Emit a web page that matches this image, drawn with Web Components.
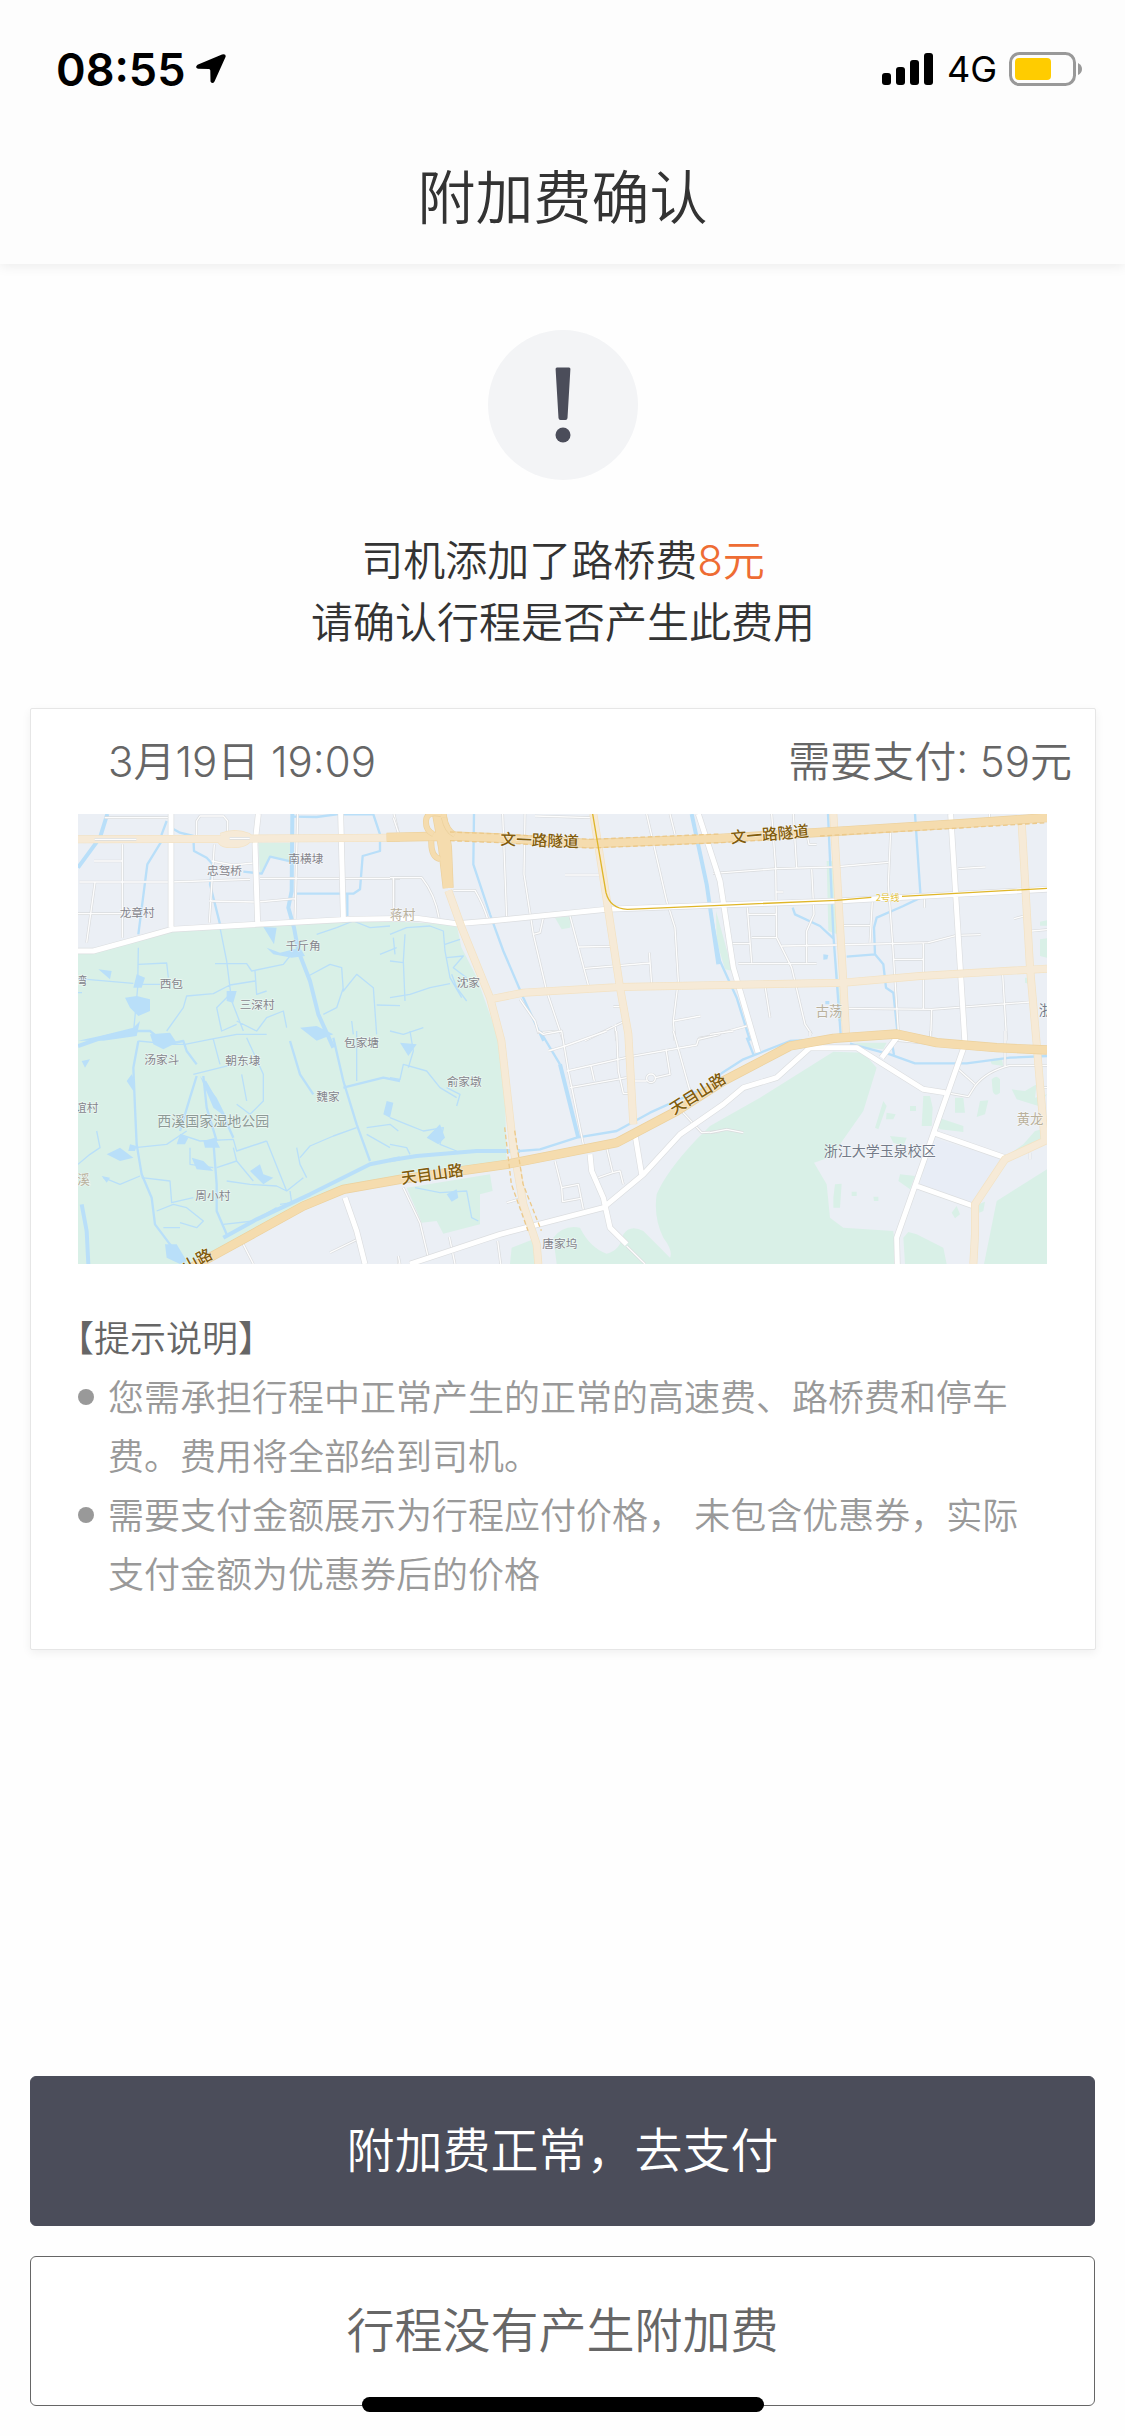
<!DOCTYPE html>
<html lang="zh-CN">
<head>
<meta charset="utf-8">
<meta name="viewport" content="width=device-width, initial-scale=1">
<title>附加费确认</title>
<style>
  body {
    margin: 0;
    background: #fefefe;
    color: #333;
    font-family: Inter, "Noto Sans CJK SC", sans-serif;
    font-weight: 350;
  }
</style>
</head>
<body>
<fee-page>
  <status-bar slot="top" time="08:55" network="4G"></status-bar>
  <page-header slot="top">附加费确认</page-header>
  <fee-notice>
    <span>司机添加了路桥费</span>
    <em slot="amount">8元</em>
    <span slot="question">请确认行程是否产生此费用</span>
  </fee-notice>
  <trip-card>
    <time slot="date">3月19日 19:09</time>
    <span slot="price">需要支付: 59元</span>
    <trip-map></trip-map>
    <tip-list heading="【提示说明】">
      <tip-item>您需承担行程中正常产生的正常的高速费、路桥费和停车费。费用将全部给到司机。</tip-item>
      <tip-item>需要支付金额展示为行程应付价格， 未包含优惠券，实际支付金额为优惠券后的价格</tip-item>
    </tip-list>
  </trip-card>
  <fee-button slot="actions" primary>附加费正常，去支付</fee-button>
  <fee-button slot="actions">行程没有产生附加费</fee-button>
</fee-page>

<script>
'use strict';

function makeTemplate(html) {
	const template = document.createElement('template');
	template.innerHTML = html;
	return template;
}

class BaseElement extends HTMLElement {
	constructor() {
		super();
		const shadow = this.attachShadow({mode: 'open'});
		shadow.appendChild(this.constructor.template.content.cloneNode(true));
	}
}

class FeePage extends BaseElement {
	static template = makeTemplate(`
<style>
  :host {
    display: flex;
    flex-direction: column;
    position: relative;
    min-height: 100vh;
  }
  header {
    background: #fdfdfd;
    box-shadow: 0 2px 12px rgba(0, 0, 0, .08);
  }
  main {
    padding: 66px 29px 60px 30px;
  }
  footer {
    display: grid;
    gap: 30px;
    margin-top: auto;
    padding: 0 30px 30px;
  }
  .home {
    position: absolute;
    left: 50%;
    bottom: 24px;
    width: 402px;
    height: 15px;
    margin-left: -201px;
    border-radius: 8px;
    background: #000;
  }
</style>
<header><slot name="top"></slot></header>
<main><slot></slot></main>
<footer><slot name="actions"></slot></footer>
<div class="home"></div>`);
}

customElements.define('fee-page', FeePage);

class StatusBar extends BaseElement {
	static template = makeTemplate(`
<style>
  :host {
    display: flex;
    align-items: center;
    height: 132px;
    padding: 6px 42px 0 56px;
    box-sizing: border-box;
    color: #000;
  }
  .time {
    font-size: 45px;
    font-weight: 600;
  }
  .arrow {
    margin-left: 10px;
  }
  .bars {
    margin-left: auto;
  }
  .network {
    margin: 0 12px;
    font-size: 36px;
    font-weight: 400;
  }
</style>
<span class="time"></span>
<svg class="arrow" width="32" height="32" viewBox="0 0 32 32"><path d="M27 1.500Q31.500 .5 30.500 4L19.500 28.500Q17.500 31.500 15.500 28.500L15.300 17.500Q15.200 16 14 16L3 15.800Q-.5 14.500 2.500 11.800Z"/></svg>
<svg class="bars" width="53" height="34" viewBox="0 0 53 34"><rect x="0" y="21" width="9" height="12" rx="3"/><rect x="14" y="15" width="9" height="18" rx="3"/><rect x="28" y="8" width="9" height="25" rx="3"/><rect x="42" y="1" width="9" height="32" rx="3"/></svg>
<span class="network"></span>
<svg width="74" height="36" viewBox="0 0 74 36">
  <rect x="1.500" y="2.500" width="64" height="31" rx="9" fill="none" stroke="#999" stroke-width="3"/>
  <rect x="6" y="7" width="36" height="22" rx="4" fill="#fc0"/>
  <path d="M69 12Q73 14 73 18T69 24Z" fill="#999"/>
</svg>`);

	connectedCallback() {
		this.shadowRoot.querySelector('.time').textContent = this.getAttribute('time');
		this.shadowRoot.querySelector('.network').textContent = this.getAttribute('network');
	}
}

customElements.define('status-bar', StatusBar);

class PageHeader extends BaseElement {
	static template = makeTemplate(`
<style>
  :host {
    display: block;
    height: 132px;
  }
  h1 {
    margin: 0;
    font-size: 58px;
    font-weight: inherit;
    line-height: 132px;
    text-align: center;
  }
</style>
<h1><slot></slot></h1>`);
}

customElements.define('page-header', PageHeader);

class FeeNotice extends BaseElement {
	static template = makeTemplate(`
<style>
  :host {
    display: block;
    padding-bottom: 54px;
    font-size: 42px;
    line-height: 62px;
  }
  svg {
    display: block;
    margin: 0 auto 50px;
  }
  p {
    display: flex;
    justify-content: center;
    margin: 0;
  }
  ::slotted(em) {
    color: #ee6c33;
    font-style: normal;
  }
</style>
<svg width="150" height="150" viewBox="0 0 150 150">
  <circle cx="75" cy="75" r="75" fill="#f3f4f6"/>
  <path d="M69 37.500H81Q82.500 37.500 82.400 39L79.500 88Q79.300 90 77.500 90H72.500Q70.700 90 70.500 88L67.600 39Q67.500 37.500 69 37.500Z" fill="#4b4d5a"/>
  <circle cx="75" cy="105" r="7.500" fill="#4b4d5a"/>
</svg>
<p><slot></slot><slot name="amount"></slot></p>
<p><slot name="question"></slot></p>`);
}

customElements.define('fee-notice', FeeNotice);

class TripCard extends BaseElement {
	static template = makeTemplate(`
<style>
  :host {
    display: block;
    border: 1px solid #e6e6e6;
    border-radius: 2px;
    box-shadow: 0 3px 10px rgba(0, 0, 0, .06);
    background: #fff;
  }
  .summary {
    display: flex;
    justify-content: space-between;
    padding: 0 23px 0 77px;
    color: #666;
    font-size: 42px;
    line-height: 105px;
  }
  .content {
    padding: 0 48px 44px 47px;
  }
</style>
<div class="summary"><slot name="date"></slot><slot name="price"></slot></div>
<div class="content"><slot></slot></div>`);
}

customElements.define('trip-card', TripCard);

// Map drawing, in a 2907 x 1350 space. Every sheet has its own origin.
const mapStyles = {
	park: { fill: '#d9f0e7' },
	campus: { fill: '#e8edf6' },
	lake: { fill: '#b9dff9' },
	river: { stroke: '#b9dff9', width: 12 },
	stream: { stroke: '#b9dff9', width: 7 },
	brook: { stroke: '#b9dff9', width: 4 },
	lane: { stroke: '#fdfdfd', width: 4, edge: '#d9dbdd' },
	street: { stroke: '#fff', width: 15, edge: '#dcdee0' },
	avenue: { stroke: '#f6ead7', width: 20, edge: '#f3e2c3' },
	highway: { stroke: '#f5dcae', width: 24, edge: '#ecd19d' },
	ramp: { stroke: '#f5dcae', width: 14, edge: '#ecd19d' },
	dash: { stroke: '#ecc98a', width: 4, dash: '14 8' },
	metro: { stroke: '#dfb629', width: 4 },
};

const mapSheets = [
	{ x: 0, y: 0, shapes: [
		['park', 'M0 411L46 411 156 381 281 346 536 331 816 316 1136 332 1150 400 1196 490 1260 670 1281 851 1286 1050 966 1091 806 1121 686 1180 406 1320 350 1350H0Z'],
	] },
	// north west
	{ x: -24, y: -39, shapes: [
		['park', 'M565 125H665L660 180 600 165 570 220Z'],
		['river', 'M112 39L90 110 24 200M667 39L665 270 655 320 672 380 685 450 720 540 745 640 790 740'],
		['stream', 'M290 60L275 100 272 125 232 190 205 400M303 80L330 95 370 105 372 150 410 170 428 190 420 250 450 370M667 47L740 48 800 40 910 40 930 100 930 150 878 165 870 265 850 278 680 278M832 280V345M665 182L600 167 575 218 520 212'],
		['brook', 'M450 380L470 480 485 600 520 690M205 440L203 560 190 700M205 490L290 486 295 530M24 533L190 547M205 550L270 550M435 488L530 488 545 510 640 490 660 465M290 690L340 620 350 585 430 578 480 552 555 540M555 510L560 580 590 570M480 580L440 620 455 690 500 670M500 660L560 690 590 650 640 630 650 680M715 525L780 490 815 500 820 570 860 520 910 560 920 700M760 640L800 620 820 560M920 612L990 614M740 400L800 380 850 360 900 380 960 375M845 660L850 700M930 460L980 440M24 575H36'],
		['lake', 'M590 440L630 455 690 440 705 465 665 470 610 460ZM165 590L200 585 240 595 240 630 205 645 180 620ZM470 570L500 570 490 605 470 600ZM200 520L225 530 215 560H190ZM85 505L125 510 120 535ZM580 378L620 380 612 430ZM690 680L740 675 790 700 740 719ZM24 719L90 705 190 680 210 660 200 705 100 719Z'],
		['lane', 'M104 50H300M157 130V410M72 180H157M28 243H300L540 235M24 338H155M75 245L50 425M380 110V60L390 45H460L473 60V110M433 130L418 365M425 180L490 192 550 186M418 300L563 303 675 293M683 39L675 355M570 232H990M972 39L985 95M972 232V320'],
	] },
	// north centre
	{ x: 936, y: -39, shapes: [
		['park', 'M495 350L545 345 540 380 515 385Z'],
		['stream', 'M252 39L250 190 300 340 340 450 400 590 460 720'],
		['river', 'M905 39L950 250 985 490'],
		['brook', 'M0 400L50 380 120 375 160 390 165 450 180 530 215 590M45 400L40 480 45 600M0 590L60 580 120 560 180 548M165 430L210 415M170 470L220 465 190 500 230 530M0 480L40 485M0 690L40 700 100 680M10 410L15 460M185 520L200 560 230 600'],
		['lane', 'M10 50L25 95M0 230H95Q135 280 147 350M10 232V340M190 268H255Q280 310 295 360M338 39L350 350M405 39L402 220 430 400 450 395 460 350M430 400L470 570 520 719M435 45L600 50M770 39L830 300 855 380 865 540 850 660 855 719M840 39L855 100M525 222H630M540 345L595 552M565 438L665 436M585 502L780 486M778 455L785 550M390 595L435 660 445 695 515 690M585 719L705 660M670 617H690M675 670L680 719M850 660L932 645M925 712L990 700M970 217H990'],
	] },
	// north east
	{ x: 1896, y: -39, shapes: [
		['park', 'M350 180L370 180 382 400 355 390ZM18 330L68 510 45 505 20 420ZM990 362L1011 358V374H990ZM990 415L1011 412V470L990 465ZM945 530H962L960 550 945 545ZM376 450L398 660 385 660Z'],
		['stream', 'M354 39L370 400 392 700M0 320L30 480 80 590 120 719M615 39L632 290 580 315 500 350 492 380 495 460 410 467M495 460L520 490 528 560 550 575 562 690M248 320L255 340 330 375 370 412'],
		['lake', 'M340 460L355 462 352 475 340 476ZM346 600H358V610H346Z'],
		['lane', 'M185 39L197 200 200 410 245 500 285 670 305 700M250 39L260 200M10 217L200 203 370 198 535 184M305 205L312 340 290 390V485M197 273H220M542 90L535 250 548 430 565 690M745 203L827 198M643 290V320M112 320L125 485M112 340H197M125 410H200M65 428H120M85 488H320M215 435L380 432 655 425 740 403 812 401M487 300L480 425M400 374H480M550 475H640M640 425V625M415 622L665 625 960 603M665 625L662 719M878 520L890 719M165 555L180 650M0 705L110 675M912 353L950 343M965 390L1011 386M293 110L297 130H320M838 39V55'],
	] },
	// south west
	{ x: -24, y: 651, shapes: [
		['river', 'M24 45L90 22 190 0M460 620L560 565 720 490 900 400 990 382M35 520L50 600 55 699'],
		['stream', 'M205 30L190 110 195 230 200 340 215 430 245 500 255 580 300 640 340 690M190 0L240 0 290 40 340 30 350 60 380 100M380 135L360 200 330 300M400 135L410 230 440 330M405 150L450 230 490 320M430 330L440 460 440 540 470 610M660 30L690 130 730 190M790 20L820 150 860 280 900 390M820 170L940 140 990 150'],
		['brook', 'M205 30L310 40 345 40 420 25 500 10 590 10M370 130L490 100M430 25L450 100M530 20L580 130 580 210 540 250 500 220M515 130L530 210M195 350L290 340 350 300M330 310L390 330 490 325 500 360 590 330M440 410L500 390 490 350M590 330L650 480 620 465 540 460 470 450M500 390L550 450M650 480L700 440M680 350L690 400 710 440M690 380L720 345 790 315 860 290M100 440L150 460 210 435M215 440L300 450 305 515 370 500M260 540L310 520 350 530 400 570 380 590 330 575M660 480L665 515 630 520M860 0L860 150M890 290L960 280 985 300M890 310L960 350M24 400L60 370 90 350 80 300M460 580L550 570 620 530M280 590L330 590M360 350L360 400 430 410'],
		['lake', 'M110 370L150 350 190 380 150 390ZM390 135L440 200 470 260 430 230ZM285 640L320 640 350 690 330 699 290 680ZM180 340L200 345 195 360H175ZM185 130L195 150 190 180 170 150ZM540 420L570 400 580 430 610 440 580 460ZM35 90L60 85 45 110ZM240 10L300 5 320 35 280 55 250 40ZM365 380L400 390 430 420 380 415ZM400 330L435 320 450 350H405ZM95 435L120 440 110 455ZM950 210L970 215 960 260 940 250ZM330 310L355 320 345 340H320Z'],
		['lane', 'M520 640L550 699M780 665L858 627M985 675V699'],
	] },
	// south centre
	{ x: 936, y: 651, shapes: [
		['park', 'M50 470L300 430 308 480 270 490V580L160 608 140 570 95 575ZM360 699L365 650 430 625 440 699ZM500 699L490 620Q520 580 570 590 600 650 650 668 690 660 700 610 720 580 760 600 800 640 840 680 850 660 820 620 790 560 800 490 830 420 920 325L960 285 1110 200 1330 62 1420 65 1460 110 1420 240 1350 340 1330 375 1272 395 1310 460 1320 560 1360 590 1510 600 1520 699Z'],
		['river', 'M0 388L80 375 260 360 390 360M510 100L565 320'],
		['stream', 'M450 0L510 100M390 360L450 355 560 320 680 300 780 245 990 150'],
		['brook', 'M0 140L30 145 40 100 110 120 150 170 200 200M60 0L70 60 55 110M0 260L50 280 100 300 160 290 150 340 200 360M75 470L150 485 230 480 245 560 265 570M0 340L50 350 60 370M170 170L210 190 200 225'],
		['lake', 'M110 320L150 280 165 320 145 340ZM170 490L200 475 205 500 185 512ZM30 35L80 40 55 75Z'],
		['lane', 'M445 0L460 10 515 0 535 120 580 340M475 60L525 45 650 0M530 120L720 77 920 42 925 25 990 10M603 105L613 150M540 170L710 140M680 0L685 120 700 187H720M735 150H770M797 140L840 130 828 55M770 142A12 12 0 1 0 796 142A12 12 0 1 0 770 142M850 0L900 180M495 390L515 470 565 460 580 535M515 470L518 512 572 502M650 350L668 425 625 440M668 425L690 420 700 460M40 470L90 575 115 680M323 630L332 699M178 618L195 699M25 675L30 699M350 515L385 505M870 235L935 305 990 302M710 645L765 699'],
	] },
	// south east
	{ x: 1896, y: 651, shapes: [
		['park', 'M585 699L580 620 595 603 620 610 700 650 710 699ZM822 699L860 510 1011 415V699ZM430 35L530 35 520 55 470 50ZM845 145Q860 130 870 145V185Q855 200 848 180ZM530 245L557 250 550 265H528ZM640 195H660L668 230 665 285 635 285ZM600 225H618V240H600ZM735 200H760L765 245H735ZM680 280L690 262 760 285V303L690 295ZM810 210L835 208 825 250 800 258ZM520 210L495 290 505 295 530 225ZM540 315L590 320 580 345 550 335ZM370 500L375 460 395 458 390 530 370 530ZM425 482H440V495H425ZM490 497H505V510H492ZM725 545L740 525 750 550 735 562ZM805 520L825 512 820 540 808 545ZM905 175L945 180 980 160 975 200 1011 190 985 225 920 205ZM840 85L875 80 880 105 845 100ZM975 300L1011 290V330L950 360 890 375 940 340ZM570 430L615 435 600 475 565 450Z'],
		['campus', 'M665 320L880 385 790 520 630 460Z'],
		['stream', 'M30 130L100 85 240 30 330 25M110 20L130 70M420 38L540 70 615 97 770 97 900 80 1011 75M545 30L552 72'],
		['lane', 'M0 10L70 0M300 0V15M662 0V15M885 0V105M1011 103L900 103Q830 120 795 165L775 197 720 187M795 160L745 115M560 28L660 38M960 365V385M0 305L50 295 100 305M1000 170H1011'],
	] },
	// main roads, over all of the sheets
	{ x: 0, y: 0, shapes: [
		['street', 'M0 411L46 411 156 381 281 346 536 331 816 316 1016 313 1136 329 1236 321 1586 286 1926 273 2276 261 2907 226M279 0V340M541 0L531 91 539 326M788 0L796 311M1861 0L1926 200 1966 461 2040 715M2618 0L2661 690 2516 1101 2456 1271 2458 1350M996 1350L1266 1261 1576 1181 1696 1081 1806 961 1936 871 1996 821 2096 791 2196 701 2336 701 2536 826 2602 836M1671 961L1691 1081M1536 1021L1541 1071 1576 1151 1596 1241 1646 1291M801 1151L836 1251 861 1350M2566 956L2781 1031M2516 1116L2686 1176M2411 731L2456 671'],
		['avenue', 'M0 76L500 74 966 71M1111 230L1151 341 1236 551 1270 680 1306 1001 1336 1171 1376 1291 1381 1350M1546 0L1576 191 1626 521 1651 660 1666 931M1236 556L1336 536 1626 519 2296 506 2526 486 2907 464M2266 0L2296 506 2304 660M2831 26L2856 461 2876 690 2900 981 2781 1036 2691 1171 2691 1261 2686 1350M430 68Q470 52 510 68Q510 88 470 90T430 78'],
		['highway', 'M926 70L1116 66 1266 72 1536 89 1926 73 2276 52 2646 29 2907 11M340 1361L676 1176 796 1126 966 1096 1286 1051 1616 986 1796 891 1936 801 2136 696 2266 673 2456 660 2576 686 2756 701 2907 708M1076 0L1094 100 1108 222M1092 0L1108 100 1113 222'],
		['ramp', 'M1090 0Q1046 -10 1044 20T1066 60M1060 80Q1058 130 1086 135M1098 10Q1106 50 1130 62'],
		['lane', 'M50 76H175M455 73H515'],
		['dash', 'M1116 54L1266 60 1536 76 1926 60M1116 80L1266 86 1536 102 1926 86 2100 76M2226 66L2646 42 2907 26M1310 950L1335 1110 1390 1250M1280 940L1300 1110 1350 1250'],
		['metro', 'M1544 0L1584 236Q1596 284 1648 286L1926 274 2276 259 2380 250M2472 247L2907 223'],
	] },
];

// x, y, size, colour, text, turn, weight
const mapLabels = [
	[631, 146, 35, '#85858c', '南横埭'],
	[387, 183, 35, '#85858c', '忠驾桥'],
	[125, 308, 35, '#85858c', '龙章村'],
	[623, 409, 35, '#85858c', '千斤角'],
	[-8, 513, 35, '#85858c', '湾'],
	[245, 523, 35, '#85858c', '西包'],
	[485, 586, 35, '#85858c', '三深村'],
	[1136, 518, 35, '#85858c', '沈家'],
	[798, 700, 35, '#85858c', '包家塘'],
	[199, 751, 35, '#85858c', '汤家斗'],
	[442, 753, 35, '#85858c', '朝东埭'],
	[715, 860, 35, '#85858c', '魏家'],
	[-9, 894, 35, '#85858c', '谊村'],
	[352, 1157, 35, '#85858c', '周小村'],
	[1106, 816, 35, '#85858c', '俞家墩'],
	[1393, 1302, 35, '#85858c', '唐家坞'],
	[238, 935, 42, '#8d9a96', '西溪国家湿地公园'],
	[2237, 1025, 42, '#737a88', '浙江大学玉泉校区'],
	[2882, 602, 42, '#737a88', '浙'],
	[-2, 1110, 38, '#b9b09c', '溪'],
	[936, 315, 38, '#b9b09c', '蒋村'],
	[2213, 606, 40, '#b9b09c', '古荡'],
	[2816, 929, 40, '#b9b09c', '黄龙'],
	[2393, 260, 28, '#e5c440', '2号线'],
	[1267, 92, 47, '#815c0c', '文一路隧道', 2, 500],
	[1960, 88, 47, '#815c0c', '文一路隧道', -5, 500],
	[972, 1110, 47, '#815c0c', '天目山路', -8, 500],
	[1788, 903, 47, '#815c0c', '天目山路', -32, 500],
	[324, 1376, 47, '#815c0c', '山路', -28, 500],
];

class TripMap extends BaseElement {
	static template = makeTemplate(`
<style>
  :host {
    display: block;
  }
  svg {
    display: block;
    width: 100%;
    background: #ebeff5;
    overflow: hidden;
  }
  path {
    fill: none;
    stroke-linejoin: round;
  }
  text {
    font-family: "Noto Sans CJK SC", sans-serif;
    paint-order: stroke;
    stroke: rgba(255, 255, 255, .5);
    stroke-width: 4px;
  }
</style>
<svg viewBox="0 0 2907 1350" role="img" aria-label="行程地图"></svg>`);

	connectedCallback() {
		const svg = this.shadowRoot.querySelector('svg');
		svg.replaceChildren();
		mapSheets.forEach((sheet) => {
			const group = this._add(svg, 'g', { transform: `translate(${sheet.x} ${sheet.y})` });
			sheet.shapes.forEach(([kind, d]) => this._drawShape(group, mapStyles[kind], d));
		});
		mapLabels.forEach(([x, y, size, fill, text, turn = 0, weight = 400]) => {
			const label = this._add(svg, 'text', {
				x, y, fill, 'font-size': size, 'font-weight': weight, transform: `rotate(${turn} ${x} ${y})`
			});
			label.textContent = text;
		});
	}

	_drawShape(group, style, d) {
		if (style.fill) {
			this._add(group, 'path', { d, style: `fill: ${style.fill}` });
			return;
		}
		if (style.edge) {
			this._add(group, 'path', { d, stroke: style.edge, 'stroke-width': style.width + 4 });
		}
		this._add(group, 'path', {
			d, stroke: style.stroke, 'stroke-width': style.width, 'stroke-dasharray': style.dash || 'none'
		});
	}

	_add(parent, name, attributes) {
		const node = document.createElementNS('http://www.w3.org/2000/svg', name);
		Object.entries(attributes).forEach(([key, value]) => node.setAttribute(key, value));
		return parent.appendChild(node);
	}
}

customElements.define('trip-map', TripMap);

class TipList extends BaseElement {
	static template = makeTemplate(`
<style>
  :host {
    display: block;
    padding-top: 46px;
    font-size: 36px;
    line-height: 59px;
  }
  h2 {
    margin: 0 0 0 -20px;
    color: #666;
    font-size: 36px;
    font-weight: inherit;
  }
</style>
<h2></h2>
<div role="list"><slot></slot></div>`);

	connectedCallback() {
		this.shadowRoot.querySelector('h2').textContent = this.getAttribute('heading');
	}
}

customElements.define('tip-list', TipList);

class TipItem extends BaseElement {
	static template = makeTemplate(`
<style>
  :host {
    display: flex;
    gap: 14px;
    color: #999;
  }
  i {
    flex: none;
    width: 16px;
    height: 16px;
    margin-top: 20px;
    border-radius: 50%;
    background: #999;
  }
</style>
<i></i><span><slot></slot></span>`);

	connectedCallback() {
		this.setAttribute('role', 'listitem');
	}
}

customElements.define('tip-item', TipItem);

class FeeButton extends BaseElement {
	static template = makeTemplate(`
<style>
  :host {
    display: block;
  }
  button {
    display: block;
    width: 100%;
    padding: 0;
    border: 1px solid #666;
    border-radius: 6px;
    background: #fff;
    color: #666;
    font: inherit;
    font-size: 48px;
    line-height: 148px;
  }
  :host([primary]) button {
    border-color: #4b4d5a;
    background: #4b4d5a;
    color: #fff;
  }
</style>
<button type="button"><slot></slot></button>`);
}

customElements.define('fee-button', FeeButton);
</script>
</body>
</html>
